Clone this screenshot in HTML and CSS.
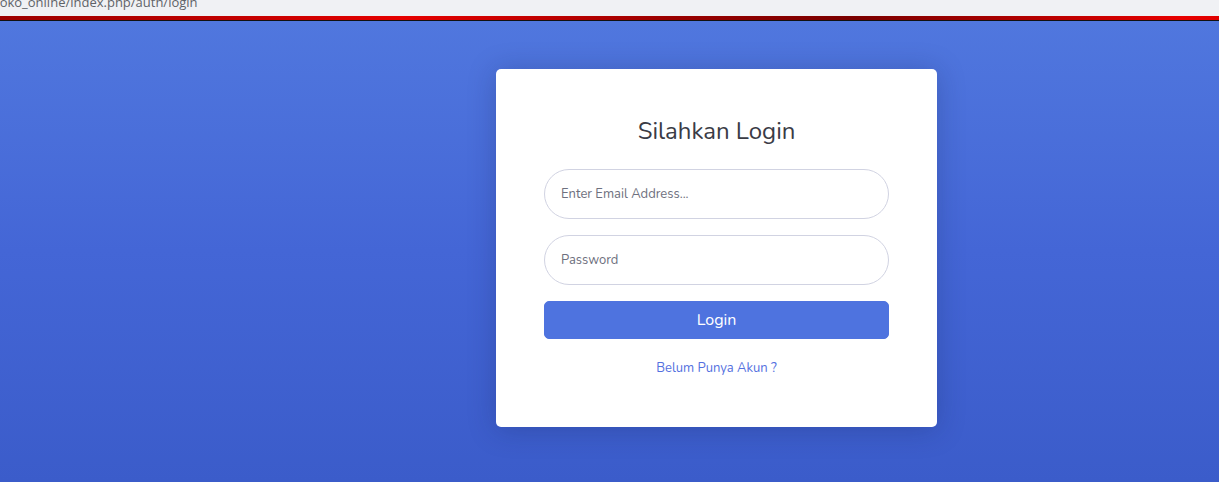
FILE: index.html
```html
<!DOCTYPE html>
<html lang="id">
<head>
<meta charset="utf-8">
<title>Login</title>
<link rel="stylesheet" href="styles.css">
</head>
<body>
<div class="chrome">
  <div class="url">toko_online/index.php/auth/login</div>
</div>
<div class="redbar"></div>
<div class="blackline"></div>
<main class="page">
  <div class="card">
    <h1 class="title">Silahkan Login</h1>
    <form class="form">
      <input class="field" type="email" placeholder="Enter Email Address...">
      <input class="field" type="password" placeholder="Password">
      <button class="btn" type="button">Login</button>
    </form>
    <a class="link" href="#">Belum Punya Akun ?</a>
  </div>
</main>
</body>
</html>
```
FILE: styles.css
```css
html, body {
  margin: 0;
  padding: 0;
  height: 100%;
  overflow: hidden;
}
body {
  font-family: "Nunito", "Lato", "Noto Sans", sans-serif;
  background: #3d5fcc;
}
.chrome {
  height: 16px;
  background: #f0f1f4;
  overflow: hidden;
}
.url {
  font-family: "Open Sans", "Noto Sans", sans-serif;
  font-size: 13px;
  line-height: 13px;
  color: #5f6368;
  margin-top: -4px;
  margin-left: -5px;
  white-space: nowrap;
}
.redbar {
  height: 4px;
  background: linear-gradient(90deg, #9c0000 0%, #c40000 20%, #e60000 33%, #d00000 40%, #9a0000 55%, #7a0000 70%, #a00000 80%, #e80000 97%, #e00000 100%);
}
.blackline {
  height: 1px;
  background: #111;
}
.page {
  height: calc(100% - 21px);
  background: linear-gradient(180deg, #5077de 0%, #4466d6 50%, #3b5cca 100%);
  display: flex;
  justify-content: center;
  align-items: flex-start;
  padding-top: 48px;
  box-sizing: border-box;
}
.card {
  width: 441px;
  box-sizing: border-box;
  margin-left: 214px;
  background: #fff;
  border-radius: 5px;
  padding: 48px 48px 50px;
  box-shadow: 0 .15rem 1.75rem 0 rgba(20, 30, 80, .25);
  display: flex;
  flex-direction: column;
  align-items: center;
}
.title {
  margin: 0 0 23px;
  font-size: 24px;
  line-height: 29px;
  font-weight: 400;
  color: #3a3b45;
}
.form {
  width: 100%;
  display: flex;
  flex-direction: column;
  gap: 16px;
}
.field {
  width: 100%;
  height: 50px;
  box-sizing: border-box;
  border: 1px solid #d1d3e2;
  border-radius: 25px;
  padding: 0 16px;
  font-family: inherit;
  font-size: 13px;
  color: #6e707e;
  outline: none;
}
.field::placeholder {
  color: #6e707e;
}
.btn {
  height: 38px;
  border: 1px solid #4e73df;
  border-radius: 5px;
  background: #4e73df;
  color: #fff;
  font-family: inherit;
  font-size: 16px;
  cursor: pointer;
}
.link {
  margin-top: 20px;
  font-size: 13px;
  line-height: 18px;
  color: #5470e0;
  text-decoration: none;
}
```
